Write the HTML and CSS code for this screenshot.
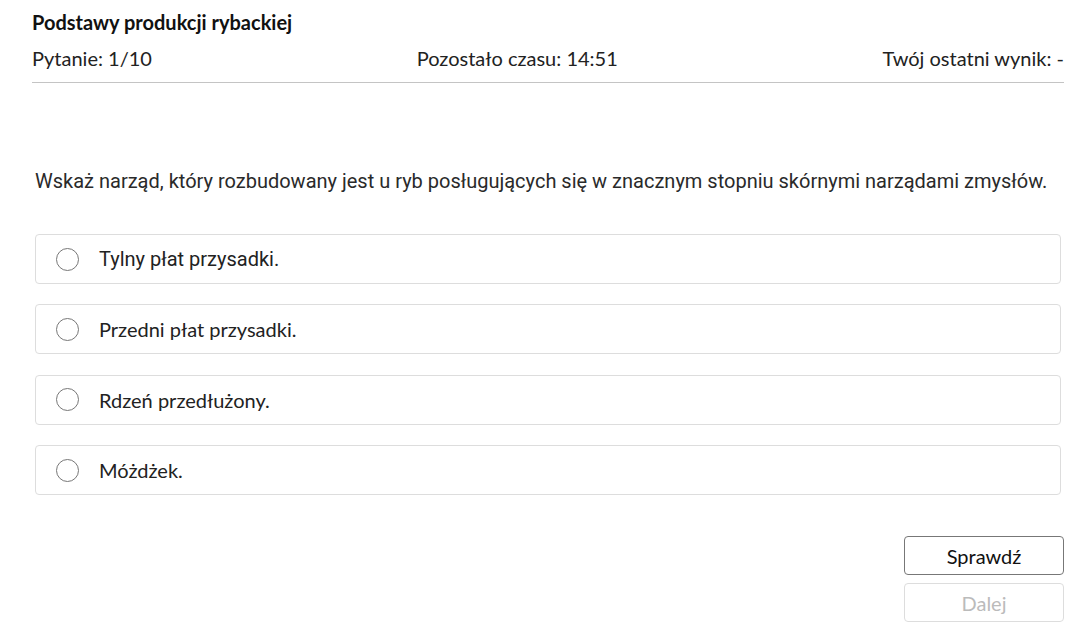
FILE: index.html
```html
<!doctype html>
<html>

<head>
<title>Podstawy produkcji rybackiej</title>
<link rel="stylesheet" href="styles.css">
</head>

<body>
    <div id="container">
        <div class="head">
            <p class="title">Podstawy produkcji rybackiej</p>
            <div class="info">
                <span>Pytanie: 1/10</span>
                <span>Pozostało czasu: 14:51</span>
                <span>Twój ostatni wynik: -</span>
            </div>
        </div>

        <p class="question">Wskaż narząd, który rozbudowany jest u ryb posługujących się w znacznym stopniu skórnymi narządami zmysłów.</p>

        <div class="answers">
            <label class="answer"><span class="radio"></span><span class="txt roboto">Tylny płat przysadki.</span></label>
            <label class="answer"><span class="radio"></span><span class="txt">Przedni płat przysadki.</span></label>
            <label class="answer"><span class="radio"></span><span class="txt">Rdzeń przedłużony.</span></label>
            <label class="answer"><span class="radio"></span><span class="txt">Móżdżek.</span></label>
        </div>

        <div class="buttons">
            <button class="btn">Sprawdź</button>
            <button class="btn off" disabled>Dalej</button>
        </div>
    </div>
</body>

</html>
```

FILE: styles.css
```css
*{
    margin : 0;
    padding : 0;
    box-sizing : border-box;
}
body{
    background : white;
    font-family : Lato, "Liberation Sans", sans-serif;
    color : #222;
}

#container{
    padding : 10px 25px 0 32px;
}

.head{
    border-bottom : 1px solid #c4c4c4;
    padding-bottom : 12px;
}
.title{
    font-weight : bold;
    font-size : 20px;
    line-height : 24px;
    color : #111;
}
.info{
    display : flex;
    justify-content : space-between;
    font-size : 20px;
    line-height : 24px;
    margin-top : 12px;
}

.question{
    font-family : Roboto, "Liberation Sans", sans-serif;
    font-size : 20px;
    line-height : 24px;
    margin : 86px 0 0 3px;
    color : #2a2a2a;
}

.answers{
    display : flex;
    flex-direction : column;
    gap : 20.4px;
    margin : 41px 3px 0 3px;
}
.answer{
    display : flex;
    align-items : center;
    height : 50px;
    border : 1px solid #ddd;
    border-radius : 4px;
    padding-left : 20px;
}
.radio{
    width : 23px;
    height : 23px;
    border : 1px solid #777;
    border-radius : 50%;
    margin-right : 20px;
}
.txt{
    font-size : 20px;
    color : #222;
}
.roboto{
    font-family : Roboto, "Liberation Sans", sans-serif;
}

.buttons{
    display : flex;
    flex-direction : column;
    align-items : flex-end;
    gap : 8px;
    margin-top : 41px;
}
.btn{
    width : 160px;
    height : 39px;
    background : white;
    border : 1px solid #777;
    border-radius : 4px;
    font-family : Lato, "Liberation Sans", sans-serif;
    font-size : 20px;
    color : #111;
}
.btn.off{
    border-color : #ddd;
    color : #bbb;
}
```
